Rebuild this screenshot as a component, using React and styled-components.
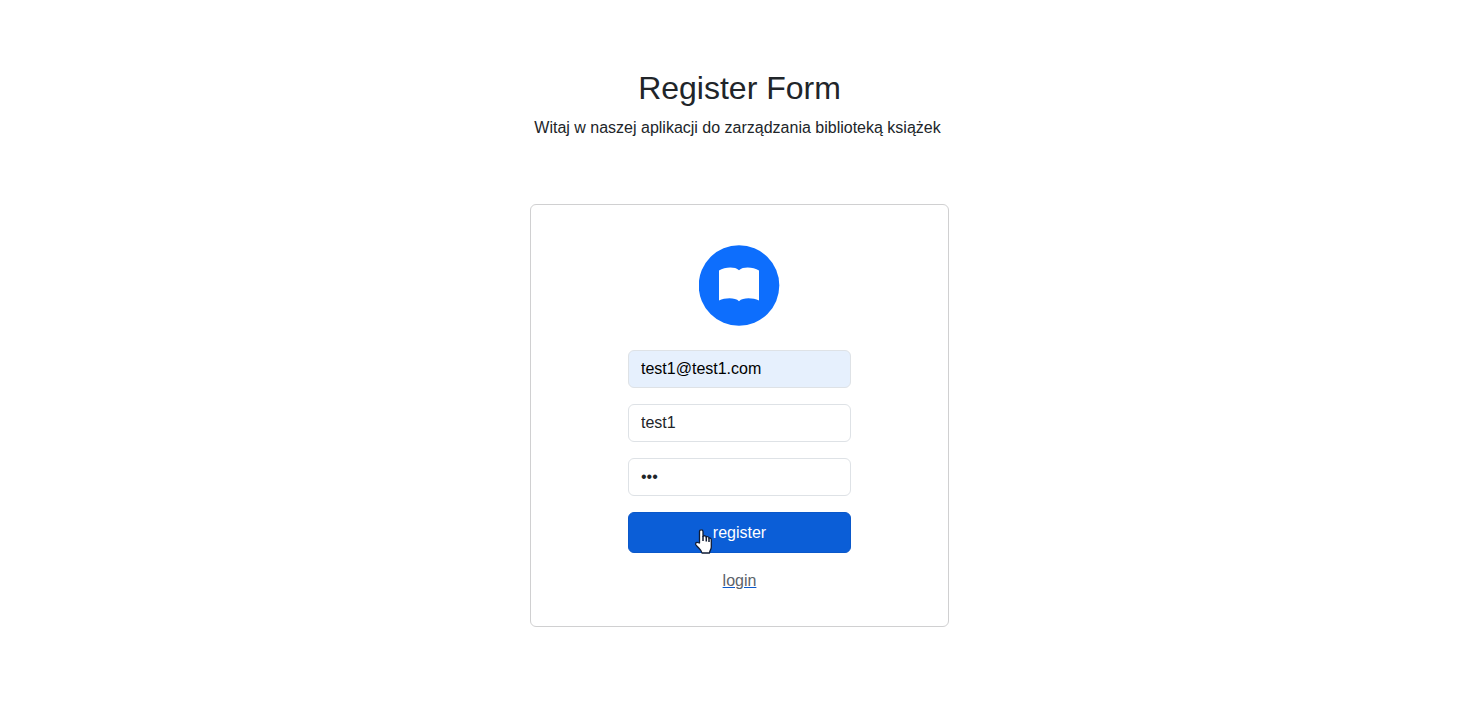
import React from "react";
import styled, { createGlobalStyle } from "styled-components";

const GlobalStyle = createGlobalStyle`
  *, *::before, *::after { box-sizing: border-box; }
  body {
    margin: 0;
    background: #fff;
    color: #212529;
    font-family: "Liberation Sans", Arial, sans-serif;
    font-size: 16px;
    line-height: 24px;
  }
`;

const Page = styled.main`
  display: flex;
  flex-direction: column;
  align-items: center;
  gap: 64px;
  padding: 68px 3px 96px 0;
`;

const Header = styled.header`
  display: flex;
  flex-direction: column;
  gap: 8px;
  text-align: center;
`;

const Title = styled.h1`
  margin: 0;
  font-size: 32px;
  font-weight: 400;
  line-height: 40px;
`;

const Intro = styled.p`
  margin: 0;
  padding-right: 4px;
`;

const Card = styled.section`
  width: 100%;
  max-width: 419px;
  padding: 40px 97px 33px;
  border: 1px solid #d0d0d1;
  border-radius: 6px;
`;

const Form = styled.form`
  display: flex;
  flex-direction: column;
  align-items: center;
  gap: 16px;
`;

const Logo = styled.svg`
  display: block;
  width: 81px;
  height: 81px;
  margin-bottom: 8px;
`;

const Field = styled.input`
  width: 100%;
  height: 38px;
  padding: 6px 12px;
  border: 1px solid #dee2e6;
  border-radius: 6px;
  outline: none;
  background: ${({ $filled }) => ($filled ? "#e6f0fd" : "#fff")};
  color: ${({ $filled }) => ($filled ? "#000" : "#212529")};
  font: inherit;
`;

const SubmitButton = styled.button`
  position: relative;
  width: 100%;
  height: 41px;
  padding: 1px 0 0;
  border: 1px solid #0a58ca;
  border-radius: 6px;
  background: #0b5ed7;
  color: #fff;
  font: inherit;
  cursor: pointer;
`;

const Pointer = styled.svg`
  position: absolute;
  top: 16px;
  left: 65px;
  width: 19px;
  height: 25px;
`;

const LoginLink = styled.a`
  color: #5c636a;
  text-decoration: underline #0a58ca;
`;

function BookLogo() {
  return (
    <Logo viewBox="0 0 81 81" aria-hidden="true">
      <circle cx="40" cy="40.5" r="40.3" fill="#0d6efd" />
      <path
        d="M20 25.5C25.5 22.2 35.5 21.2 40 25.2C44.5 21.2 54.5 22.2 60 25.5V55.5C54 52.8 44 52.3 40 56.2C36 52.3 26 52.8 20 55.5Z"
        fill="#fff"
      />
    </Logo>
  );
}

function HandPointer() {
  return (
    <Pointer viewBox="0 0 19 25" aria-hidden="true">
      <path
        d="M5.5 14V2.5C5.5 .3 9 .3 9 2.5V7.3C10 6.3 12 6.7 12.3 8C13.4 7.2 14.8 7.8 15 9C16.5 8.7 17.3 9.6 17.3 11V18C17.3 20.5 15.8 21 15.5 24H8C7.5 21.2 5 19.5 2.8 17C.3 14.7 2 12.7 4.2 13.6Z"
        fill="#fff"
        stroke="#101c35"
        strokeWidth="1.3"
        strokeLinejoin="round"
      />
      <path d="M9 7V12M12.3 8V12.5M15 9V13" fill="none" stroke="#101c35" strokeWidth="1.5" />
    </Pointer>
  );
}

export default function App() {
  return (
    <>
      <GlobalStyle />
      <Page>
        <Header>
          <Title>Register Form</Title>
          <Intro lang="pl">Witaj w naszej aplikacji do zarządzania biblioteką książek</Intro>
        </Header>
        <Card>
          <Form onSubmit={(event) => event.preventDefault()}>
            <BookLogo />
            <Field $filled type="email" aria-label="Email" defaultValue="test1@test1.com" />
            <Field type="text" aria-label="Username" defaultValue="test1" />
            <Field type="password" aria-label="Password" defaultValue="abc" />
            <SubmitButton type="submit">
              register
              <HandPointer />
            </SubmitButton>
            <LoginLink href="#login">login</LoginLink>
          </Form>
        </Card>
      </Page>
    </>
  );
}
